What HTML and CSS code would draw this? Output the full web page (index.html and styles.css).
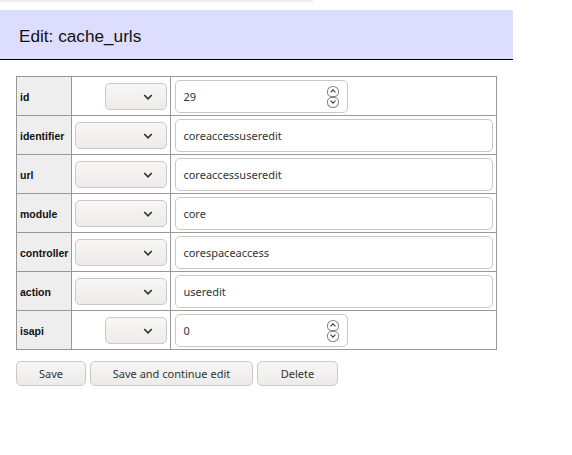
FILE: index.html
```html
<!DOCTYPE html>
<html>
<head>
<meta charset="utf-8">
<link rel="stylesheet" href="styles.css">
</head>
<body>
<div class="topbar"></div>
<h1 class="title">Edit: cache_urls</h1>
<div class="content">
<table class="grid">
  <tr>
    <th>id</th>
    <td class="op"><span class="sel narrow"><svg width="10" height="6" viewBox="0 0 10 6"><path d="M1.2 1 L5 4.8 L8.8 1" fill="none" stroke="#2e3436" stroke-width="1.7"/></svg></span></td>
    <td class="val"><span class="num"><span class="numtext">29</span><span class="spin"><i class="up"></i><i class="down"></i></span></span></td>
  </tr>
  <tr>
    <th>identifier</th>
    <td class="op"><span class="sel"><svg width="10" height="6" viewBox="0 0 10 6"><path d="M1.2 1 L5 4.8 L8.8 1" fill="none" stroke="#2e3436" stroke-width="1.7"/></svg></span></td>
    <td class="val"><span class="txt">coreaccessuseredit</span></td>
  </tr>
  <tr>
    <th>url</th>
    <td class="op"><span class="sel"><svg width="10" height="6" viewBox="0 0 10 6"><path d="M1.2 1 L5 4.8 L8.8 1" fill="none" stroke="#2e3436" stroke-width="1.7"/></svg></span></td>
    <td class="val"><span class="txt">coreaccessuseredit</span></td>
  </tr>
  <tr>
    <th>module</th>
    <td class="op"><span class="sel"><svg width="10" height="6" viewBox="0 0 10 6"><path d="M1.2 1 L5 4.8 L8.8 1" fill="none" stroke="#2e3436" stroke-width="1.7"/></svg></span></td>
    <td class="val"><span class="txt">core</span></td>
  </tr>
  <tr>
    <th>controller</th>
    <td class="op"><span class="sel"><svg width="10" height="6" viewBox="0 0 10 6"><path d="M1.2 1 L5 4.8 L8.8 1" fill="none" stroke="#2e3436" stroke-width="1.7"/></svg></span></td>
    <td class="val"><span class="txt">corespaceaccess</span></td>
  </tr>
  <tr>
    <th>action</th>
    <td class="op"><span class="sel"><svg width="10" height="6" viewBox="0 0 10 6"><path d="M1.2 1 L5 4.8 L8.8 1" fill="none" stroke="#2e3436" stroke-width="1.7"/></svg></span></td>
    <td class="val"><span class="txt">useredit</span></td>
  </tr>
  <tr>
    <th>isapi</th>
    <td class="op"><span class="sel narrow"><svg width="10" height="6" viewBox="0 0 10 6"><path d="M1.2 1 L5 4.8 L8.8 1" fill="none" stroke="#2e3436" stroke-width="1.7"/></svg></span></td>
    <td class="val"><span class="num"><span class="numtext">0</span><span class="spin"><i class="up"></i><i class="down"></i></span></span></td>
  </tr>
</table>
<div class="buttons">
  <button class="btn b-save">Save</button>
  <button class="btn b-cont">Save and continue edit</button>
  <button class="btn b-del">Delete</button>
</div>
</div>
</body>
</html>
```

FILE: styles.css
```css
html, body {
  margin: 0;
  padding: 0;
  background: #fff;
  font-family: "Liberation Sans", Arial, sans-serif;
}
.topbar {
  width: 313px;
  height: 2px;
  background: #eeeeee;
  margin-bottom: 8px;
}
.title {
  width: 513px;
  box-sizing: border-box;
  height: 50px;
  margin: 0;
  padding: 16px 0 0 19px;
  background: #ddddff;
  border-bottom: 1px solid #000;
  font-weight: normal;
  font-size: 17.2px;
  line-height: 20px;
  color: #111;
}
.content {
  padding: 16px 0 0 16px;
}
.grid {
  border-collapse: collapse;
  width: 481px;
}
.grid th, .grid td {
  border: 1px solid #999;
  padding: 3px 3px 2px 3px;
}
.grid th {
  background: #eeeeee;
  text-align: left;
  font-size: 10.5px;
  font-weight: bold;
  width: 48px;
  color: #111;
}
.grid td.op {
  width: 92px;
  text-align: right;
}
.sel {
  display: inline-flex;
  align-items: center;
  justify-content: flex-end;
  box-sizing: border-box;
  width: 92px;
  height: 27px;
  padding-right: 13px;
  vertical-align: middle;
  border: 1px solid #cdc7c2;
  border-radius: 5px;
  background: linear-gradient(#f8f7f6, #edebe9);
}
.sel.narrow {
  width: 62px;
}
.grid td.val {
  padding: 3px 3px 2px 4px;
}
.txt, .num {
  display: flex;
  align-items: center;
  box-sizing: border-box;
  height: 33px;
  border: 1px solid #cdc7c2;
  border-radius: 5px;
  background: #fff;
  padding-left: 7px;
  font-family: "Noto Sans", sans-serif;
  font-size: 11px;
  color: #2e3436;
}
.num {
  width: 173px;
  justify-content: space-between;
  padding-right: 8px;
}
.spin {
  display: flex;
  flex-direction: column;
}
.spin i {
  display: block;
  box-sizing: border-box;
  width: 12px;
  height: 11px;
  border: 1px solid #8a8580;
  border-radius: 50%;
  position: relative;
}
.spin i.up {
  border-bottom-left-radius: 40%;
  border-bottom-right-radius: 40%;
}
.spin i.down {
  border-top-left-radius: 40%;
  border-top-right-radius: 40%;
}
.spin i::after {
  content: "";
  position: absolute;
  left: 3px;
  width: 3px;
  height: 3px;
  border-left: 1.5px solid #2e3436;
  border-top: 1.5px solid #2e3436;
}
.spin i.up::after {
  top: 3px;
  transform: rotate(45deg);
}
.spin i.down::after {
  top: 1px;
  transform: rotate(225deg);
}
.buttons {
  display: flex;
  gap: 4px;
  margin-top: 11px;
}
.btn {
  box-sizing: border-box;
  height: 25px;
  border: 1px solid #cdc7c2;
  border-radius: 5px;
  background: linear-gradient(#f8f7f6, #edebe9);
  font-family: "Noto Sans", sans-serif;
  font-size: 11px;
  color: #2e3436;
  padding: 0;
}
.b-save { width: 70px; }
.b-cont { width: 163px; }
.b-del { width: 81px; }
```
